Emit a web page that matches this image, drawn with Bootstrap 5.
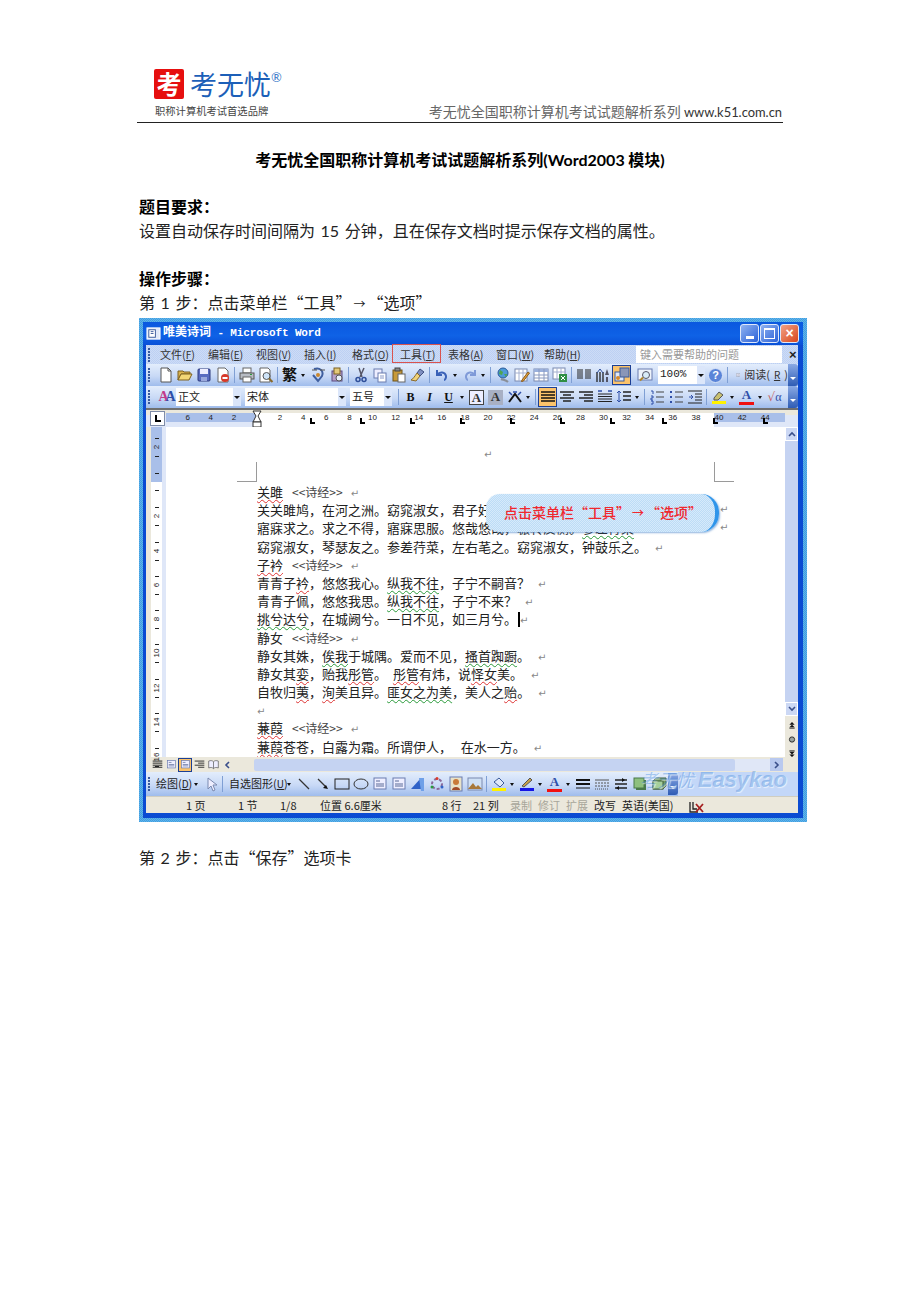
<!DOCTYPE html>
<html lang="zh-CN">
<head>
<meta charset="UTF-8">
<meta name="viewport" content="width=device-width, initial-scale=1.0">
<title>考无忧全国职称计算机考试试题解析系列</title>
<link href="https://cdn.jsdelivr.net/npm/bootstrap@5.3.0/dist/css/bootstrap.min.css" rel="stylesheet">
<style>
body { background: #fff; color: #000; font-family: "Noto Sans CJK SC", sans-serif; font-size: 16px; line-height: 1.2; }
.lt { font-family: "Lato", sans-serif; }
.lt-num { font-family: "Lato", sans-serif; margin: 0 2px; }
.arw { display: inline-block; width: 16px; text-align: center; font-size: 12px; }
.page { width: 920px; height: 1302px; padding: 61px 137px 0 137px; overflow: hidden; }
.page-head { height: 62px; border-bottom: 1px solid #222; }
.logo { padding-left: 17px; width: 160px; }
.logo-mark { width: 30px; height: 30px; background: #e60f0f; color: #fff; font-size: 25px; font-weight: 700; line-height: 29px; text-align: center; border-radius: 2px; }
.logo-name { color: #1c5fb8; font-size: 27px; line-height: 30px; margin-left: 6px; }
.logo-reg { color: #3d7cc9; font-size: 13px; line-height: 1; margin-top: 2px; }
.logo-sub { color: #444; font-size: 10.3px; line-height: 14px; margin-top: 5px; margin-left: 1px; white-space: nowrap; }
.head-right { color: #666; font-size: 14px; line-height: 17px; margin-right: 1px; padding-bottom: 1px; white-space: nowrap; }
.head-right .lt { font-size: 12.9px; color: #333; }
.doc-title { font-weight: 700; text-align: center; margin-top: 26px; height: 22px; line-height: 20px; white-space: nowrap; }
.para { margin: 0 0 0 2px; height: 24px; line-height: 23px; white-space: nowrap; color: #222; }
.para-b { font-weight: 700; color: #000; }
.doc-gap { margin-top: 24px; }
.para-last { margin-top: 24px; }

.word { position: relative; width: 668px; height: 504px; margin: 3px 0 0 2px; background: repeating-conic-gradient(#3f9fe0 0 25%, #62b2ea 0 50%) 0 0 / 2px 2px; padding: 4px; font-family: "Noto Sans CJK SC", sans-serif; font-size: 11px; color: #222; }
.word-in { background: #0b4bd2; height: 496px; padding: 0 5px 5px 3px; border-radius: 4px 4px 0 0; }
.w-title { height: 23px; background: linear-gradient(#0a58df, #0f62e6 60%, #0950d8); color: #fff; font: 700 11px/23px "Liberation Mono", "Noto Sans CJK SC", monospace; letter-spacing: -.15px; margin: 0 -5px 0 -3px; padding-left: 3px; }
.w-title svg { margin: 0 2px 0 0; flex: none; }
.w-title-cjk { font-size: 12px; letter-spacing: 0; }
.w-btn { width: 19px; height: 19px; border: 1px solid #dfe8fa; border-radius: 3px; background: linear-gradient(135deg, #8fb2f0, #2c62d8); margin-right: 1px; }
.w-close { background: linear-gradient(135deg, #f2a285, #d8461c); color: #fff; font: 700 14px/16px "Liberation Sans", sans-serif; text-align: center; margin-right: 4px; }
.w-btn-min { width: 8px; height: 3px; background: #fff; margin: 11px 0 0 5px; }
.w-btn-max { width: 11px; height: 11px; border: 1px solid #fff; border-top-width: 2px; margin: 3px 0 0 3px; }
.w-menu { height: 19px; background: repeating-conic-gradient(#bdd0f3 0 25%, #cddcf6 0 50%) 0 0 / 2px 2px; line-height: 19px; position: relative; }
.m-item { width: 48px; white-space: nowrap; font-size: 11px; color: #333; }
.m-item u, .draw-txt u, .tb-fmt u { font-size: 10px; }
.m-box { position: absolute; left: 246px; top: -1px; width: 49px; height: 19px; border: 1px solid #d9534f; }
.m-help { width: 146px; height: 17px; background: #fff; color: #999; line-height: 16px; padding-left: 4px; margin-left: 44px; flex: none; }
.m-x { font: 700 13px/17px "Liberation Sans", sans-serif; margin-left: 7px; }
.tbar { height: 22px; background: linear-gradient(#e3edfc, #c8d9f6 55%, #9fbcec); }
.grip { width: 8px; height: 14px; margin-left: 2px; background: radial-gradient(circle at 1px 1px, #37589a 1px, transparent 1.2px) 0 0 / 8px 3px; flex: none; }
.ti { width: 19px; height: 20px; flex: none; display: flex; align-items: center; justify-content: center; }
.ti-on { background: #fbc36b; border: 1px solid #1c3f94; }
.dd { width: 9px; height: 20px; flex: none; position: relative; }
.dd::after { content: ""; position: absolute; left: 2px; top: 9px; border: 2.5px solid transparent; border-top: 3px solid #111; }
.sep { width: 1px; height: 16px; background: #7f9fd4; margin: 0 2px 0 2px; flex: none; }
.fld { background: #fff; height: 18px; line-height: 17px; padding-left: 2px; color: #222; flex: none; white-space: nowrap; }
.fld-1 { width: 57px; margin-left: 1px; }
.fld-2 { width: 93px; }
.fld-3 { width: 34px; }
.fld-z { width: 39px; font: 11px/17px "Liberation Mono", monospace; }
.fld-dd { background: #dbe6fa; width: 8px; height: 18px; flex: none; position: relative; margin-right: 4px; }
.fld-dd-z { margin-right: 1px; }
.fld-dd::after { content: ""; position: absolute; left: 1px; top: 8px; border: 3px solid transparent; border-top: 3px solid #111; }
.chev { width: 10px; height: 22px; background: linear-gradient(#8aa9e4, #2f5cb4); border-radius: 0 3px 3px 0; margin-left: auto; position: relative; flex: none; }
.chev::after { content: ""; position: absolute; left: 2px; bottom: 3px; border: 3px solid transparent; border-top: 3px solid #fff; }
.tb-b { font: 700 12px/20px "Liberation Serif", "Noto Sans CJK SC", serif; color: #111; }
.tb-fan { font-size: 15px; }
.tb-fmt { color: #333; font-size: 11px; width: 52px; margin-left: 6px; flex: none; }
.ic-a { width: 15px; height: 15px; font: 700 13px/14px "Liberation Serif", serif; text-align: center; color: #333; }
.ic-abox { border: 1px solid #444; background: #eef; }
.ic-agray { background: #a8b0c4; }
.ic-fc { height: 16px; border-bottom: 3px solid #f01010; color: #2f4fa8; line-height: 12px; }
.ic-help { width: 15px; height: 15px; border-radius: 50%; background: #5a84d8; border: 1px solid #d8e4f8; color: #fff; font: 700 11px/13px "Liberation Sans", sans-serif; text-align: center; }
.ic-style { font: 700 14px/16px "Liberation Serif", serif; letter-spacing: -3px; color: #c23a8a; white-space: nowrap; }
.ic-style span { color: #2f4fa8; }
.ic-sq { font: 12px/16px "DejaVu Sans", sans-serif; color: #c8686a; white-space: nowrap; }
.ic-sq span { color: #2f4fa8; font-family: "Liberation Serif", serif; }

.hruler { height: 19px; background: linear-gradient(#ebe8dc 5px, #dfe7f8 5px); position: relative; border-top: 2px solid #6f6f6f; overflow: hidden; }
.rl-box { position: absolute; left: 4px; top: 1px; width: 15px; height: 15px; border: 1px solid #7f8ca8; background: #fff; }
.rl-box::after { content: ""; position: absolute; left: 4px; top: 3px; width: 6px; height: 7px; border-left: 2px solid #000; border-bottom: 2px solid #000; }
.rl-shade { position: absolute; top: 3px; height: 9px; background: #a9bfe9; }
.rl-shade-a { left: 20px; width: 91px; }
.rl-shade-b { left: 568px; width: 71px; }
.rl-white { position: absolute; top: 3px; height: 14px; left: 111px; width: 457px; background: #fff; }
.rl-num { position: absolute; top: 2px; width: 16px; margin-left: -8px; text-align: center; font: 8px/11px "Liberation Sans", sans-serif; color: #222; }
.rl-tab { position: absolute; top: 8px; width: 5px; height: 6px; border-left: 2px solid #000; border-bottom: 2px solid #000; }
.rl-hour { position: absolute; left: 106px; top: 0; }
.w-body { height: 330px; }
.vruler { width: 20px; background: linear-gradient(90deg, #ebe8dc 5px, #dfe7f8 5px); position: relative; flex: none; }
.vr-bar { position: absolute; left: 5px; top: 0; width: 11px; height: 330px; background: #fff; }
.vr-shade { position: absolute; left: 5px; top: 0; width: 11px; height: 55px; background: #a9bfe9; }
.vr-num { position: absolute; left: 5px; width: 11px; margin-top: -5px; height: 10px; line-height: 10px; text-align: center; font: 8px/10px "Liberation Sans", sans-serif; transform: rotate(-90deg); color: #222; }
.vr-tick { position: absolute; left: 9px; width: 4px; height: 1px; background: #222; }
.sheet { position: relative; flex: 1 1 auto; background: #fff; overflow: hidden; font-size: 13px; color: #222; }
.sheet-lines { padding: 56px 0 0 91px; }
.ln { height: 18.2px; line-height: 18.2px; white-space: nowrap; }
.rt { color: #888; font-size: 10px; margin-left: 8px; font-family: "DejaVu Sans", sans-serif; }
.rt-a { position: absolute; margin: 0; line-height: 12px; }
.rt-top { left: 318px; top: 22px; }
.rt-2 { left: 554px; top: 77px; }
.rt-3 { left: 554px; top: 95px; }
.bk { margin-left: 9px; color: #444; font-size: 12px; }
.rd { text-decoration: underline wavy #d33; text-decoration-thickness: 1px; text-underline-offset: 2px; }
.gr { text-decoration: underline wavy #2a9a3a; text-decoration-thickness: 1px; text-underline-offset: 2px; }
.caret-bar { display: inline-block; width: 2px; height: 15px; background: #000; vertical-align: -3px; margin-left: 1px; }
.crop { position: absolute; width: 20px; height: 20px; border: 0 solid #9a9a9a; }
.crop-l { left: 71px; top: 35px; border-right-width: 1px; border-bottom-width: 1px; }
.crop-r { left: 548px; top: 35px; border-left-width: 1px; border-bottom-width: 1px; }
.callout { position: absolute; left: 320px; top: 67px; width: 233px; height: 38px; padding-left: 5px; background: repeating-conic-gradient(#bcdcf6 0 25%, #d6eafb 0 50%) 0 0 / 2px 2px; border-right: 4px solid #2f95ea; border-radius: 14px 18px 18px 14px; color: #f0282e; font-size: 14px; font-weight: 500; line-height: 36px; text-align: center; white-space: nowrap; box-shadow: 1px 1px 2px rgba(70,130,200,.6); }
.vscroll { width: 13px; background: #c5d3f2; flex: none; display: flex; flex-direction: column; }
.vs-btn { height: 14px; background: #ccd8f4; border: 1px solid #fff; flex: none; }
.vs-fill { flex: 1 1 auto; }
.vs-nav { background: #ebe8dc; height: 41px; flex: none; display: flex; flex-direction: column; align-items: center; padding-top: 6px; gap: 7px; }
.hscroll { height: 15px; background: #ebe8dc; }
.vb { width: 14px; height: 14px; flex: none; display: flex; align-items: center; justify-content: center; }
.hs-track { width: 481px; height: 12px; background: #c5d3f2; margin-left: 20px; border-radius: 2px; flex: none; }
.hs-rest { flex: 1 1 auto; height: 12px; background: #e0e7f7; }
.hs-btn { width: 13px; height: 13px; background: #b9c9ef; flex: none; margin-right: 15px; display: flex; align-items: center; justify-content: center; }
.draw-row { height: 24px; background: #c3d7f8; }
.draw-row .tbar { height: 24px; width: 532px; flex: none; }
.draw-txt { color: #222; white-space: nowrap; flex: none; }
.dt-1 { width: 36px; }
.dt-2 { width: 56px; }
.status { height: 17px; background: #ebe8dc; border-top: 1px solid #cfcdc0; line-height: 16px; white-space: nowrap; color: #222; font-size: 11px; }
.st { flex: none; }
.st-a { width: 92px; padding-left: 40px; }
.st-b { width: 42px; }
.st-c { width: 40px; }
.st-d { width: 122px; }
.st-e { width: 31px; }
.st-f { width: 37px; }
.st-g { width: 28px; }
.st-h { width: 65px; }
.st-off { color: #a8a69a; }
.wmark { position: absolute; right: 20px; bottom: 27px; color: rgba(70,140,220,.42); font: italic 700 22px/28px "Liberation Sans", "Noto Sans CJK SC", sans-serif; white-space: nowrap; text-shadow: 1px 1px 1px rgba(255,255,255,.6); }
.wmark-cjk { font-size: 18px; font-weight: 400; margin-right: 4px; }
</style>
</head>
<body>

<svg width="0" height="0" class="d-block position-absolute">
  <symbol id="i-new" viewBox="0 0 16 16"><path d="M3 1h7l3 3v11H3z" fill="#fff" stroke="#555"/><path d="M10 1v3h3" fill="none" stroke="#555"/></symbol>
  <symbol id="i-open" viewBox="0 0 16 16"><path d="M1 4h5l1 1h6v2H4L1 13z" fill="#d9b14c" stroke="#7d6020"/><path d="M1 13l3-6h11l-3 6z" fill="#f3d676" stroke="#7d6020"/></symbol>
  <symbol id="i-save" viewBox="0 0 16 16"><rect x="2" y="2" width="12" height="12" rx="1" fill="#5a6cc0" stroke="#2d3a7c"/><rect x="4" y="2" width="8" height="5" fill="#eef"/><rect x="5" y="10" width="6" height="4" fill="#9aa8dc"/></symbol>
  <symbol id="i-perm" viewBox="0 0 16 16"><path d="M3 1h7l3 3v11H3z" fill="#fff" stroke="#666"/><circle cx="10" cy="11" r="4" fill="#d83a2a"/><rect x="7.500" y="10" width="5" height="2" fill="#fff"/></symbol>
  <symbol id="i-print" viewBox="0 0 16 16"><rect x="4" y="1" width="8" height="5" fill="#fff" stroke="#666"/><rect x="1" y="6" width="14" height="6" fill="#b8bcc4" stroke="#555"/><rect x="4" y="10" width="8" height="5" fill="#fff" stroke="#666"/><rect x="11" y="7" width="2" height="1" fill="#2a9a3a"/></symbol>
  <symbol id="i-prev" viewBox="0 0 16 16"><path d="M2 1h8l2 2v12H2z" fill="#fff" stroke="#666"/><circle cx="8.500" cy="9" r="3.500" fill="#cfe4f8" stroke="#555"/><path d="M11 11.500l3.500 3.500" stroke="#8a6a2a" stroke-width="2"/></symbol>
  <symbol id="i-res" viewBox="0 0 16 16"><path d="M4 2c6-2 10 2 8 7l-4 5-5-6" fill="none" stroke="#3f5f9f" stroke-width="2"/><path d="M2 3l5 0M10 3h5" stroke="#555"/><circle cx="8" cy="8" r="2" fill="#c9872e"/></symbol>
  <symbol id="i-res2" viewBox="0 0 16 16"><rect x="3" y="4" width="10" height="10" fill="#b5a0c8" stroke="#5a4a80"/><rect x="5" y="1" width="6" height="6" fill="#e3c97a" stroke="#7d6020"/><circle cx="10" cy="11" r="3" fill="#e9f0fb" stroke="#555"/></symbol>
  <symbol id="i-cut" viewBox="0 0 16 16"><path d="M6 1l3 9M11 1L7 10" stroke="#556" stroke-width="1.500"/><circle cx="5" cy="12.500" r="2" fill="none" stroke="#2f4f9a" stroke-width="1.500"/><circle cx="11" cy="12.500" r="2" fill="none" stroke="#2f4f9a" stroke-width="1.500"/></symbol>
  <symbol id="i-copy" viewBox="0 0 16 16"><rect x="2" y="2" width="8" height="9" fill="#eef" stroke="#6a7cb0"/><rect x="6" y="6" width="8" height="9" fill="#fff" stroke="#6a7cb0"/><path d="M8 9h4M8 11h4" stroke="#8a9ac8"/></symbol>
  <symbol id="i-paste" viewBox="0 0 16 16"><rect x="2" y="3" width="9" height="11" fill="#c89a3a" stroke="#6d5218"/><rect x="4" y="1" width="5" height="3" fill="#888" stroke="#444"/><rect x="7" y="7" width="7" height="8" fill="#fff" stroke="#666"/></symbol>
  <symbol id="i-brush" viewBox="0 0 16 16"><path d="M10 2l4 3-4 4-3-3z" fill="#7f8fc0" stroke="#3f4f80"/><path d="M7 6l3 3-4 5-5-1c2-1 4-4 6-7z" fill="#efd27a" stroke="#8a6a2a"/></symbol>
  <symbol id="i-undo" viewBox="0 0 16 16"><path d="M3 3v5h5" fill="none" stroke="#3a62b8" stroke-width="2"/><path d="M3 8c3-4 8-3 9 1 .3 2-1 4-2 4" fill="none" stroke="#3a62b8" stroke-width="2"/></symbol>
  <symbol id="i-redo" viewBox="0 0 16 16"><path d="M13 3v5H8" fill="none" stroke="#7f9ad8" stroke-width="2"/><path d="M13 8C10 4 5 5 4 9c-.3 2 1 4 2 4" fill="none" stroke="#7f9ad8" stroke-width="2"/></symbol>
  <symbol id="i-globe" viewBox="0 0 16 16"><circle cx="8" cy="6" r="5" fill="#4d9ad8" stroke="#2a5a9a"/><path d="M5 3l3 2-1 3-3-1zM9 7l3 0-1 3z" fill="#4fa54f"/><path d="M6 12c2 1 5 1 7 3" fill="none" stroke="#8a8f98" stroke-width="2"/></symbol>
  <symbol id="i-tedit" viewBox="0 0 16 16"><rect x="1" y="2" width="12" height="12" fill="#fff" stroke="#7a8ab0"/><path d="M1 6h12M5 2v12M9 2v12" stroke="#a4b0d0"/><path d="M8 13l6-8 1.500 1-6 8-2 .5z" fill="#e6a33a" stroke="#8a5a1a"/></symbol>
  <symbol id="i-table" viewBox="0 0 16 16"><rect x="1" y="2" width="14" height="12" fill="#fff" stroke="#7a8ab0"/><rect x="1" y="2" width="14" height="3" fill="#9ab0dc"/><path d="M1 8h14M1 11h14M6 2v12M11 2v12" stroke="#8a9ac0"/></symbol>
  <symbol id="i-excel" viewBox="0 0 16 16"><rect x="1" y="1" width="12" height="11" fill="#fff" stroke="#7a8ab0"/><path d="M1 5h12M5 1v11M9 1v11" stroke="#a4b0d0"/><rect x="7" y="7" width="8" height="8" fill="#2f8f45"/><path d="M9 9l4 4M13 9l-4 4" stroke="#fff"/></symbol>
  <symbol id="i-cols" viewBox="0 0 16 16"><path d="M1 3h6M1 5h6M1 7h6M1 9h6M1 11h6M9 3h6M9 5h6M9 7h6M9 9h6M9 11h6" stroke="#222" stroke-width="1.200"/></symbol>
  <symbol id="i-drw" viewBox="0 0 16 16"><path d="M2 5v10M5 5v10M8 5v10" stroke="#222" stroke-width="1.300"/><path d="M2 6l3-4 3 4" fill="none" stroke="#2f4f9a"/><path d="M12 2l-2 6h4zM11 10h2v5h-2z" fill="#556"/></symbol>
  <symbol id="i-map" viewBox="0 0 16 16"><rect x="1" y="5" width="9" height="9" fill="#dfe8f8" stroke="#3a5a9a"/><rect x="6" y="1" width="9" height="9" fill="#8a96b8" stroke="#3a5a9a"/><circle cx="4" cy="11" r="2" fill="#d88a2a"/></symbol>
  <symbol id="i-glass" viewBox="0 0 16 16"><rect x="1" y="2" width="14" height="11" fill="#eef3fb" stroke="#6a7cb0"/><circle cx="9" cy="8" r="3.500" fill="#d9ecf8" stroke="#556"/><path d="M6 10.500l-3 3" stroke="#b0862a" stroke-width="2"/></symbol>
  <symbol id="i-book" viewBox="0 0 16 16"><path d="M1 3c3-1 5-1 7 1 2-2 4-2 7-1v10c-3-1-5-1-7 1-2-2-4-2-7-1z" fill="#eef" stroke="#555"/><path d="M8 4v10" stroke="#555"/></symbol>
  <symbol id="i-yao" viewBox="0 0 16 16"><path d="M2 13L8 5l6 8" fill="none" stroke="#111" stroke-width="2"/><path d="M2 3l3 3M14 3l-3 3M6 3h4" stroke="#2f4fa8" stroke-width="1.500"/></symbol>
  <symbol id="i-al" viewBox="0 0 16 16"><path d="M1 3h14M1 6h14M1 9h14M1 12h14" stroke="#111" stroke-width="1.300"/></symbol>
  <symbol id="i-ac" viewBox="0 0 16 16"><path d="M1 3h14M4 6h8M1 9h14M4 12h8" stroke="#222" stroke-width="1.300"/></symbol>
  <symbol id="i-ar" viewBox="0 0 16 16"><path d="M1 3h14M6 6h9M1 9h14M6 12h9" stroke="#222" stroke-width="1.300"/></symbol>
  <symbol id="i-aj" viewBox="0 0 16 16"><path d="M1 5h14M1 7.500h14M1 10h14M1 12.500h14" stroke="#222" stroke-width="1.200"/><path d="M1 2h4M11 2h4" stroke="#2f4fa8" stroke-width="1.500"/></symbol>
  <symbol id="i-ls" viewBox="0 0 16 16"><path d="M7 3h8M7 7h8M7 11h8" stroke="#222" stroke-width="1.300"/><path d="M3 2v11M1 4l2-2 2 2M1 11l2 2 2-2" fill="none" stroke="#2f4fa8"/></symbol>
  <symbol id="i-nl" viewBox="0 0 16 16"><path d="M7 3h8M7 8h8M7 13h8" stroke="#444" stroke-width="1.200"/><path d="M2 2h2v3M2 7h2v2H2v2h2M2 12h2v3H2" fill="none" stroke="#2f4fa8"/></symbol>
  <symbol id="i-bl" viewBox="0 0 16 16"><path d="M7 3h8M7 8h8M7 13h8" stroke="#444" stroke-width="1.200"/><path d="M2 3h2M2 8h2M2 13h2" stroke="#2f4fa8" stroke-width="2"/></symbol>
  <symbol id="i-ind" viewBox="0 0 16 16"><path d="M1 2h14M8 5h7M8 8h7M8 11h7M1 14h14" stroke="#222" stroke-width="1.200"/><path d="M2 8h4M4 6l2 2-2 2" fill="none" stroke="#2f4fa8"/></symbol>
  <symbol id="i-hl" viewBox="0 0 16 16"><rect x="1" y="12" width="14" height="3" fill="#fff200"/><path d="M3 9l5-6 4 3-5 5H3z" fill="#c8c070" stroke="#555"/></symbol>
  <symbol id="i-ptr" viewBox="0 0 16 16"><path d="M5 2v11l3-3 2 5 2-1-2-5h4z" fill="#eef" stroke="#7a8ab0"/></symbol>
  <symbol id="i-line" viewBox="0 0 16 16"><path d="M3 3l10 10" stroke="#333" stroke-width="1.200"/></symbol>
  <symbol id="i-arrow" viewBox="0 0 16 16"><path d="M3 3l8 8" stroke="#333" stroke-width="1.200"/><path d="M13 13l-5-1 3-3z" fill="#111"/></symbol>
  <symbol id="i-rect" viewBox="0 0 16 16"><rect x="1" y="3" width="14" height="10" fill="none" stroke="#222"/></symbol>
  <symbol id="i-oval" viewBox="0 0 16 16"><ellipse cx="8" cy="8" rx="7" ry="5" fill="none" stroke="#333"/></symbol>
  <symbol id="i-tbox" viewBox="0 0 16 16"><rect x="2" y="2" width="12" height="11" fill="#eef" stroke="#6a7cb0"/><path d="M4 5h4M4 8h8M4 10h8" stroke="#5a6a98"/></symbol>
  <symbol id="i-wa" viewBox="0 0 16 16"><path d="M1 13L11 2v11z" fill="#2f62c8"/><path d="M9 2l5 0v13h-3z" fill="#6fa0e8"/></symbol>
  <symbol id="i-dg" viewBox="0 0 16 16"><circle cx="8" cy="8" r="5" fill="none" stroke="#8a6a9a" stroke-width="2" stroke-dasharray="3 2"/><circle cx="8" cy="2.500" r="1.500" fill="#d83a2a"/><circle cx="3" cy="11" r="1.500" fill="#2a9a3a"/><circle cx="13" cy="11" r="1.500" fill="#2f62c8"/></symbol>
  <symbol id="i-clip" viewBox="0 0 16 16"><rect x="2" y="1" width="12" height="14" fill="#e8e2c8" stroke="#6a7cb0"/><circle cx="8" cy="6" r="3" fill="#c87a3a"/><path d="M4 14c0-4 8-4 8 0z" fill="#a04a2a"/></symbol>
  <symbol id="i-img" viewBox="0 0 16 16"><rect x="1" y="2" width="14" height="12" fill="#cfe0f5" stroke="#7a8ab0"/><path d="M1 13l5-6 3 4 2-2 4 4z" fill="#a8783a"/></symbol>
  <symbol id="i-fill" viewBox="0 0 16 16"><rect x="1" y="12" width="14" height="3" fill="#fff200"/><path d="M3 6l5-4 5 5-4 4z" fill="#dfe8f8" stroke="#3a5a9a"/></symbol>
  <symbol id="i-pen" viewBox="0 0 16 16"><rect x="1" y="12" width="14" height="3" fill="#1414e6"/><path d="M3 10l8-8 2 2-8 7z" fill="#c8a04a" stroke="#555"/></symbol>
  <symbol id="i-lw" viewBox="0 0 16 16"><path d="M1 4h14M1 8h14" stroke="#111" stroke-width="2"/><path d="M1 12h14" stroke="#111" stroke-width="1"/></symbol>
  <symbol id="i-dash" viewBox="0 0 16 16"><path d="M1 4h14" stroke="#555"/><path d="M1 7h14M1 10h14" stroke="#555" stroke-dasharray="2 1"/><path d="M1 13h14" stroke="#555" stroke-dasharray="1 1"/></symbol>
  <symbol id="i-as" viewBox="0 0 16 16"><path d="M2 4h12M2 12h12" stroke="#222" stroke-width="1.500"/><path d="M2 8h12" stroke="#222" stroke-width="1.500"/><path d="M9 2l3 2-3 2zM6 10l-3 2 3 2z" fill="#111"/></symbol>
  <symbol id="i-sh" viewBox="0 0 16 16"><rect x="4" y="4" width="10" height="10" fill="#4a7a4a"/><rect x="2" y="2" width="10" height="10" fill="#8ec07e" stroke="#4a7a4a"/></symbol>
  <symbol id="i-3d" viewBox="0 0 16 16"><path d="M2 5l3-3h10v8l-3 3H2z" fill="#6e9a5e" stroke="#3f5f3a"/><rect x="2" y="5" width="10" height="8" fill="#a5cf9a" stroke="#3f5f3a"/></symbol>
  <symbol id="i-app" viewBox="0 0 16 16"><rect x="1" y="2" width="14" height="12" fill="#dfe8f8" stroke="#fff"/><rect x="3" y="4" width="7" height="8" fill="#fff" stroke="#3a5a9a"/><path d="M5 6h3M5 8h3" stroke="#3a5a9a"/></symbol>
  <symbol id="i-spell" viewBox="0 0 16 16"><path d="M2 3v10h8M5 3v7h4" fill="none" stroke="#222" stroke-width="1.300"/><path d="M8 5l7 8M15 5l-7 8" stroke="#a52020" stroke-width="1.800"/></symbol>
  <symbol id="i-chev-up" viewBox="0 0 8 8"><path d="M1 6l3-3 3 3" fill="none" stroke="#3a4f8a" stroke-width="1.600"/></symbol>
  <symbol id="i-chev-dn" viewBox="0 0 8 8"><path d="M1 2l3 3 3-3" fill="none" stroke="#3a4f8a" stroke-width="1.600"/></symbol>
  <symbol id="i-chev-l" viewBox="0 0 8 8"><path d="M6 1L3 4l3 3" fill="none" stroke="#3a4f8a" stroke-width="1.600"/></symbol>
  <symbol id="i-chev-r" viewBox="0 0 8 8"><path d="M2 1l3 3-3 3" fill="none" stroke="#3a4f8a" stroke-width="1.600"/></symbol>
  <symbol id="i-nav-up" viewBox="0 0 8 8"><path d="M4 0l3 3H1zM4 3l3 3H1z" fill="#111"/><path d="M1 7h6" stroke="#111"/></symbol>
  <symbol id="i-nav-dn" viewBox="0 0 8 8"><path d="M1 1h6" stroke="#111"/><path d="M4 5L1 2h6zM4 8L1 5h6z" fill="#111"/></symbol>
  <symbol id="i-nav-dot" viewBox="0 0 8 8"><circle cx="4" cy="4" r="3" fill="#9aa4a0" stroke="#222"/></symbol>
</svg>

<div class="page">
  <header class="page-head d-flex justify-content-between align-items-end">
    <div class="logo align-self-start">
      <div class="d-flex pt-2">
        <div class="logo-mark">考</div>
        <div class="logo-name">考无忧</div>
        <div class="logo-reg lt">®</div>
      </div>
      <div class="logo-sub">职称计算机考试首选品牌</div>
    </div>
    <div class="head-right">考无忧全国职称计算机考试试题解析系列 <span class="lt">www.k51.com.cn</span></div>
  </header>

  <div class="doc-title">考无忧全国职称计算机考试试题解析系列<span class="lt">(Word2003</span> 模块<span class="lt">)</span></div>
  <p class="para para-b doc-gap">题目要求：</p>
  <p class="para">设置自动保存时间间隔为 <span class="lt-num">15</span> 分钟，且在保存文档时提示保存文档的属性。</p>
  <p class="para para-b doc-gap">操作步骤：</p>
  <p class="para">第 <span class="lt-num">1</span> 步：点击菜单栏“工具”<span class="arw">→</span>“选项”</p>

  <div class="word">
    <div class="word-in">
      <div class="w-title d-flex align-items-center">
        <svg width="15" height="15"><use href="#i-app"/></svg>
        <span class="flex-grow-1"><span class="w-title-cjk">唯美诗词</span> - Microsoft Word</span>
        <div class="w-btn"><div class="w-btn-min"></div></div>
        <div class="w-btn"><div class="w-btn-max"></div></div>
        <div class="w-btn w-close">×</div>
      </div>

      <div class="w-menu d-flex align-items-center">
        <div class="grip"></div>
        <div class="d-flex ps-1">
          <div class="m-item">文件(<u>F</u>)</div>
          <div class="m-item">编辑(<u>E</u>)</div>
          <div class="m-item">视图(<u>V</u>)</div>
          <div class="m-item">插入(<u>I</u>)</div>
          <div class="m-item">格式(<u>O</u>)</div>
          <div class="m-item">工具(<u>T</u>)</div>
          <div class="m-item">表格(<u>A</u>)</div>
          <div class="m-item">窗口(<u>W</u>)</div>
          <div class="m-item">帮助(<u>H</u>)</div>
        </div>
        <div class="m-help">键入需要帮助的问题</div>
        <div class="m-x">×</div>
        <div class="m-box"></div>
      </div>

      <div class="tbar d-flex align-items-center">
        <div class="grip"></div>
        <div class="ti"><svg width="16" height="16"><use href="#i-new"/></svg></div>
        <div class="ti"><svg width="16" height="16"><use href="#i-open"/></svg></div>
        <div class="ti"><svg width="16" height="16"><use href="#i-save"/></svg></div>
        <div class="ti"><svg width="16" height="16"><use href="#i-perm"/></svg></div>
        <div class="sep"></div>
        <div class="ti"><svg width="16" height="16"><use href="#i-print"/></svg></div>
        <div class="ti"><svg width="16" height="16"><use href="#i-prev"/></svg></div>
        <div class="sep"></div>
        <div class="ti tb-b tb-fan">繁</div><div class="dd"></div>
        <div class="ti"><svg width="16" height="16"><use href="#i-res"/></svg></div>
        <div class="ti"><svg width="16" height="16"><use href="#i-res2"/></svg></div>
        <div class="sep"></div>
        <div class="ti"><svg width="16" height="16"><use href="#i-cut"/></svg></div>
        <div class="ti"><svg width="16" height="16"><use href="#i-copy"/></svg></div>
        <div class="ti"><svg width="16" height="16"><use href="#i-paste"/></svg></div>
        <div class="ti"><svg width="16" height="16"><use href="#i-brush"/></svg></div>
        <div class="sep"></div>
        <div class="ti"><svg width="16" height="16"><use href="#i-undo"/></svg></div><div class="dd"></div>
        <div class="ti"><svg width="16" height="16"><use href="#i-redo"/></svg></div><div class="dd"></div>
        <div class="sep"></div>
        <div class="ti"><svg width="16" height="16"><use href="#i-globe"/></svg></div>
        <div class="ti"><svg width="16" height="16"><use href="#i-tedit"/></svg></div>
        <div class="ti"><svg width="16" height="16"><use href="#i-table"/></svg></div>
        <div class="ti"><svg width="16" height="16"><use href="#i-excel"/></svg></div>
        <div class="sep"></div>
        <div class="ti"><svg width="16" height="16"><use href="#i-cols"/></svg></div>
        <div class="ti"><svg width="16" height="16"><use href="#i-drw"/></svg></div>
        <div class="ti ti-on"><svg width="16" height="16"><use href="#i-map"/></svg></div>
        <div class="ti ms-1"><svg width="16" height="16"><use href="#i-glass"/></svg></div>
        <div class="fld fld-z ms-1">100%</div><div class="fld-dd fld-dd-z"></div>
        <div class="ti"><div class="ic-help">?</div></div>
        <div class="sep"></div>
        <div class="d-flex align-items-center gap-1 tb-fmt text-nowrap"><svg width="14" height="14"><use href="#i-book"/></svg>阅读(<u>R</u>)</div>
        <div class="chev"></div>
      </div>

      <div class="tbar d-flex align-items-center">
        <div class="grip"></div>
        <div class="ti"><div class="ic-style">A<span>A</span></div></div>
        <div class="fld fld-1">正文</div><div class="fld-dd"></div>
        <div class="fld fld-2">宋体</div><div class="fld-dd"></div>
        <div class="fld fld-3">五号</div><div class="fld-dd"></div>
        <div class="sep"></div>
        <div class="ti tb-b">B</div>
        <div class="ti tb-b fst-italic">I</div>
        <div class="ti tb-b text-decoration-underline">U</div><div class="dd"></div>
        <div class="ti"><div class="ic-a ic-abox">A</div></div>
        <div class="ti"><div class="ic-a ic-agray">A</div></div>
        <div class="ti"><svg width="16" height="16"><use href="#i-yao"/></svg></div><div class="dd"></div>
        <div class="sep"></div>
        <div class="ti ti-on"><svg width="16" height="16"><use href="#i-al"/></svg></div>
        <div class="ti"><svg width="16" height="16"><use href="#i-ac"/></svg></div>
        <div class="ti"><svg width="16" height="16"><use href="#i-ar"/></svg></div>
        <div class="ti"><svg width="16" height="16"><use href="#i-aj"/></svg></div>
        <div class="ti"><svg width="16" height="16"><use href="#i-ls"/></svg></div><div class="dd"></div>
        <div class="sep"></div>
        <div class="ti"><svg width="16" height="16"><use href="#i-nl"/></svg></div>
        <div class="ti"><svg width="16" height="16"><use href="#i-bl"/></svg></div>
        <div class="ti"><svg width="16" height="16"><use href="#i-ind"/></svg></div>
        <div class="sep"></div>
        <div class="ti"><svg width="16" height="16"><use href="#i-hl"/></svg></div><div class="dd"></div>
        <div class="ti"><div class="ic-a ic-fc">A</div></div><div class="dd"></div>
        <div class="ti"><div class="ic-sq">√<span>α</span></div></div>
        <div class="chev"></div>
      </div>

      <div class="hruler" id="hRuler">
        <div class="rl-box"></div>
        <div class="rl-shade rl-shade-a"></div>
        <div class="rl-white"></div>
        <div class="rl-shade rl-shade-b"></div>
        <svg class="rl-hour" width="10" height="17"><path d="M1 1h8L6 6l3 6H1l3-6z" fill="#fff" stroke="#333"/><rect x="1" y="12" width="8" height="5" fill="#fff" stroke="#333"/></svg>
      </div>

      <div class="w-body d-flex">
        <div class="vruler" id="vRuler">
          <div class="vr-bar"></div>
          <div class="vr-shade"></div>
        </div>
        <div class="sheet">
          <div class="crop crop-l"></div>
          <div class="crop crop-r"></div>
          <span class="rt rt-a rt-top">↵</span>
          <div class="sheet-lines">
            <div class="ln"><span class="rd">关雎</span><span class="bk">&lt;&lt;诗经&gt;&gt;</span><span class="rt">↵</span></div>
            <div class="ln">关关雎鸠，在河之洲。窈窕淑女，君子好逑。参差荇菜，左右流之。</div>
            <div class="ln">寤寐求之。求之不得，寤寐思服。悠哉悠哉，辗转反侧。<span class="gr">参差荇菜</span></div>
            <div class="ln">窈窕淑女，琴瑟友之。参差荇菜，左右芼之。窈窕淑女，钟鼓乐之。<span class="rt">↵</span></div>
            <div class="ln"><span class="rd">子衿</span><span class="bk">&lt;&lt;诗经&gt;&gt;</span><span class="rt">↵</span></div>
            <div class="ln">青青子<span class="rd">衿</span>，悠悠我心。<span class="gr">纵我不往</span>，子宁不嗣音？<span class="rt">↵</span></div>
            <div class="ln">青青子佩，悠悠我思。<span class="gr">纵我不往</span>，子宁不来？<span class="rt">↵</span></div>
            <div class="ln"><span class="gr">挑兮达兮</span>，在城阙兮。一日不见，如三月兮。<span class="caret-bar"></span><span class="rt ms-0">↵</span></div>
            <div class="ln">静女<span class="bk">&lt;&lt;诗经&gt;&gt;</span><span class="rt">↵</span></div>
            <div class="ln">静女其姝，<span class="gr">俟我</span>于城隅。爱而不见，<span class="gr">搔首踟蹰</span>。<span class="rt">↵</span></div>
            <div class="ln">静女其<span class="rd">娈</span>，贻我<span class="rd">彤管</span>。&nbsp;&nbsp;<span class="rd">彤管</span>有炜，说<span class="rd">怿女</span>美。<span class="rt">↵</span></div>
            <div class="ln">自牧归<span class="rd">荑</span>，<span class="rd">洵</span>美且异。<span class="gr">匪女之为美</span>，美人之<span class="rd">贻</span>。<span class="rt">↵</span></div>
            <div class="ln"><span class="rt ms-0">↵</span></div>
            <div class="ln"><span class="rd">蒹葭</span><span class="bk">&lt;&lt;诗经&gt;&gt;</span><span class="rt">↵</span></div>
            <div class="ln"><span class="rd">蒹葭</span>苍苍，白露为霜。所谓伊人，&nbsp;&nbsp; 在水一方。<span class="rt">↵</span></div>
            <div class="ln">溯洄从之，道阻且长。溯游从之，宛在水中央。</div>
          </div>
          <span class="rt rt-a rt-2">↵</span>
          <span class="rt rt-a rt-3">↵</span>
          <div class="callout">点击菜单栏“工具”<span class="arw">→</span>“选项”</div>
        </div>
        <div class="vscroll">
          <div class="vs-btn d-flex align-items-center justify-content-center"><svg width="8" height="8"><use href="#i-chev-up"/></svg></div>
          <div class="vs-fill"></div>
          <div class="vs-btn d-flex align-items-center justify-content-center"><svg width="8" height="8"><use href="#i-chev-dn"/></svg></div>
          <div class="vs-nav">
            <svg width="8" height="8"><use href="#i-nav-up"/></svg>
            <svg width="8" height="8"><use href="#i-nav-dot"/></svg>
            <svg width="8" height="8"><use href="#i-nav-dn"/></svg>
          </div>
        </div>
      </div>

      <div class="hscroll d-flex align-items-center">
        <div class="vb ms-1"><svg width="11" height="11"><use href="#i-al"/></svg></div>
        <div class="vb"><svg width="11" height="11"><use href="#i-tbox"/></svg></div>
        <div class="vb ti-on"><svg width="11" height="11"><use href="#i-tbox"/></svg></div>
        <div class="vb"><svg width="11" height="11"><use href="#i-ar"/></svg></div>
        <div class="vb"><svg width="11" height="11"><use href="#i-book"/></svg></div>
        <div class="vb"><svg width="8" height="8"><use href="#i-chev-l"/></svg></div>
        <div class="hs-track"></div>
        <div class="hs-rest"></div>
        <div class="hs-btn"><svg width="8" height="8"><use href="#i-chev-r"/></svg></div>
      </div>

      <div class="draw-row">
        <div class="tbar d-flex align-items-center">
          <div class="grip"></div>
          <div class="draw-txt dt-1">绘图(<u>D</u>)</div><div class="dd"></div>
          <div class="ti"><svg width="16" height="16"><use href="#i-ptr"/></svg></div>
          <div class="sep"></div>
          <div class="draw-txt dt-2 ms-1">自选图形(<u>U</u>)</div><div class="dd"></div>
          <div class="ti"><svg width="16" height="16"><use href="#i-line"/></svg></div>
          <div class="ti"><svg width="16" height="16"><use href="#i-arrow"/></svg></div>
          <div class="ti"><svg width="16" height="16"><use href="#i-rect"/></svg></div>
          <div class="ti"><svg width="16" height="16"><use href="#i-oval"/></svg></div>
          <div class="ti"><svg width="16" height="16"><use href="#i-tbox"/></svg></div>
          <div class="ti"><svg width="16" height="16"><use href="#i-tbox"/></svg></div>
          <div class="ti"><svg width="16" height="16"><use href="#i-wa"/></svg></div>
          <div class="ti"><svg width="16" height="16"><use href="#i-dg"/></svg></div>
          <div class="ti"><svg width="16" height="16"><use href="#i-clip"/></svg></div>
          <div class="ti"><svg width="16" height="16"><use href="#i-img"/></svg></div>
          <div class="sep"></div>
          <div class="ti"><svg width="16" height="16"><use href="#i-fill"/></svg></div><div class="dd"></div>
          <div class="ti"><svg width="16" height="16"><use href="#i-pen"/></svg></div><div class="dd"></div>
          <div class="ti"><div class="ic-a ic-fc">A</div></div><div class="dd"></div>
          <div class="ti"><svg width="16" height="16"><use href="#i-lw"/></svg></div>
          <div class="ti"><svg width="16" height="16"><use href="#i-dash"/></svg></div>
          <div class="ti"><svg width="16" height="16"><use href="#i-as"/></svg></div>
          <div class="ti"><svg width="16" height="16"><use href="#i-sh"/></svg></div>
          <div class="ti"><svg width="16" height="16"><use href="#i-3d"/></svg></div>
          <div class="chev"></div>
        </div>
      </div>

      <div class="status d-flex">
        <div class="st st-a">1 页</div>
        <div class="st st-b">1 节</div>
        <div class="st st-c">1/8</div>
        <div class="st st-d">位置 6.6厘米</div>
        <div class="st st-e">8 行</div>
        <div class="st st-f">21 列</div>
        <div class="st st-g st-off">录制</div>
        <div class="st st-g st-off">修订</div>
        <div class="st st-g st-off">扩展</div>
        <div class="st st-g">改写</div>
        <div class="st st-h">英语(美国)</div>
        <div class="st"><svg width="18" height="16"><use href="#i-spell"/></svg></div>
      </div>
    </div>
    <div class="wmark"><span class="wmark-cjk">考无忧</span>Easykao</div>
  </div>

  <p class="para para-last">第 <span class="lt-num">2</span> 步：点击“保存”选项卡</p>
</div>

<script src="https://cdn.jsdelivr.net/npm/bootstrap@5.3.0/dist/js/bootstrap.bundle.min.js"></script>
<script>
  // ruler numbers, 11.55px per unit, measured from the left page margin
  const hRuler = document.getElementById("hRuler");
  const origin = 111;
  for (let n = -6; n <= 44; n += 2) {
    if (n === 0) continue;
    const el = document.createElement("div");
    el.className = "rl-num";
    el.textContent = Math.abs(n);
    el.style.left = (origin + n * 11.55) + "px";
    hRuler.appendChild(el);
  }
  [164, 214, 264, 314, 364, 414, 464, 516, 567, 617].forEach(x => {
    const el = document.createElement("div");
    el.className = "rl-tab";
    el.style.left = x + "px";
    hRuler.appendChild(el);
  });

  const vRuler = document.getElementById("vRuler");
  const addTick = y => {
    const t = document.createElement("div");
    t.className = "vr-tick";
    t.style.top = y + "px";
    vRuler.appendChild(t);
  };
  [[20, 2], [89, 2], [124, 4], [158, 6], [192, 8], [226, 10], [261, 12], [295, 14], [330, 16]].forEach(([y, n]) => {
    const el = document.createElement("div");
    el.className = "vr-num";
    el.textContent = n;
    el.style.top = y + "px";
    vRuler.appendChild(el);
    addTick(y - 9);
    addTick(y + 9);
  });
  addTick(46);
  addTick(63);
</script>
</body>
</html>
